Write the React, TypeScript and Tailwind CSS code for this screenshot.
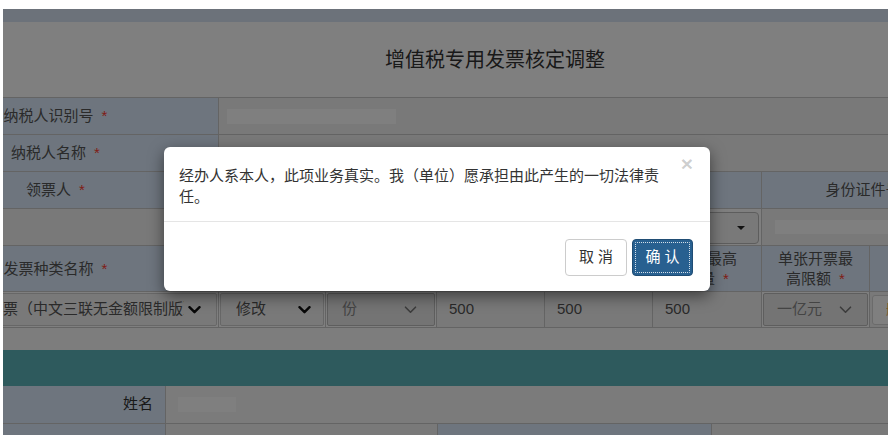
import type { ReactNode } from 'react';

/** Red required marker used after every mandatory field label. */
function Star(): JSX.Element {
  return <span className="ml-[8px] text-[#ff3b30]">*</span>;
}

interface CellProps {
  className?: string;
  children?: ReactNode;
  req?: boolean;
}

/** Blue-grey header / label cell, text centred. */
function Label({ className = '', children, req }: CellProps): JSX.Element {
  return (
    <div
      className={`flex shrink-0 items-center justify-center border-r border-[#c8c8c8] bg-[#dcebfc] text-center leading-[20px] ${className}`}
    >
      <span>
        {children}
        {req && <Star />}
      </span>
    </div>
  );
}

/** Plain value cell (an input without visible chrome). */
function Value({ className = '', children }: CellProps): JSX.Element {
  return (
    <div className={`flex shrink-0 items-center border-r border-[#c8c8c8] bg-[#f3f3f3] ${className}`}>
      {children}
    </div>
  );
}

function Chevron({ bold }: { bold?: boolean }): JSX.Element {
  return (
    <svg width="13" height="8" viewBox="0 0 13 8" className="shrink-0">
      <polyline
        points="1.5,1.2 6.5,6.2 11.5,1.2"
        fill="none"
        stroke={bold ? '#111' : '#777'}
        strokeWidth={bold ? 2.4 : 1.6}
        strokeLinecap="round"
        strokeLinejoin="round"
      />
    </svg>
  );
}

interface SelectProps {
  className?: string;
  text: string;
  textClass: string;
  padClass: string;
  disabled?: boolean;
}

/** A native-looking select: left text, chevron at the right edge. */
function Select({ className = '', text, textClass, padClass, disabled }: SelectProps): JSX.Element {
  return (
    <div className={`shrink-0 border-r border-[#c8c8c8] p-px ${className}`}>
      <div
        className={`flex h-full items-center rounded-[2px] border ${padClass} ${
          disabled ? 'border-[#bdbdbd] bg-[#e8e8e8] text-[#888]' : 'border-[#cfcfcf] bg-[#f3f3f3] text-[#555]'
        }`}
      >
        <span className={`overflow-hidden whitespace-nowrap ${textClass}`}>{text}</span>
        <span className="ml-auto">
          <Chevron bold={!disabled} />
        </span>
      </div>
    </div>
  );
}

function Modal(): JSX.Element {
  return (
    <div className="absolute left-[161px] top-[138px] w-[546px] rounded-[6px] bg-white text-[#333] shadow-[0_5px_15px_rgba(0,0,0,0.5)]">
      <button
        type="button"
        className="absolute right-[17px] top-[6px] text-[21px] font-bold leading-[21px] text-black/20"
      >
        ×
      </button>
      <div className="pb-[14px] pl-[15px] pr-[28px] pt-[18px] text-[15px] leading-[21px]">
        经办人系本人，此项业务真实。我（单位）愿承担由此产生的一切法律责任。
      </div>
      <div className="flex justify-end gap-[5px] border-t border-[#e5e5e5] pb-[15px] pr-[17px] pt-[17px]">
        <button
          type="button"
          className="h-[37px] w-[62px] rounded-[4px] border border-[#cccccc] bg-white text-[15px] text-[#333]"
        >
          取 消
        </button>
        <button
          type="button"
          className="h-[37px] w-[61px] rounded-[4px] border border-[#204d74] bg-[#286090] text-[15px] text-white outline-1 outline-offset-[-4px] outline-white/80 outline-dotted"
        >
          确 认
        </button>
      </div>
    </div>
  );
}

export default function App(): JSX.Element {
  return (
    <div className="h-[438px] w-[892px] overflow-hidden bg-white pl-[3px] pt-[9px] font-['Liberation_Sans','Noto_Sans_CJK_SC',sans-serif]">
      <div className="relative h-[426px] w-[885px] overflow-hidden">
        {/* the form is wider than the viewport and scrolled, hence the negative margin */}
        <div className="ml-[-110px] w-[1204px] text-[15px] text-[#555]">
          <div className="h-[13px] bg-[#d8e4f4]" />
          <div className="flex h-[76px] items-center justify-center border-b border-[#c8c8c8] bg-white text-[20px] text-[#333]">
            增值税专用发票核定调整
          </div>

          <div className="flex h-[37px] border-b border-[#c8c8c8]">
            <Label className="w-[326px]" req>
              纳税人识别号
            </Label>
            <Value className="flex-1 pl-[8px]">
              <div className="h-[15px] w-[169px] bg-white" />
            </Value>
          </div>
          <div className="flex h-[37px] border-b border-[#c8c8c8]">
            <Label className="w-[326px]" req>
              纳税人名称
            </Label>
            <Value className="flex-1" />
          </div>

          {/* 领票人 header row; the middle headers sit under the dialog */}
          <div className="flex h-[37px] border-b border-[#c8c8c8]">
            <Label className="w-[326px]" req>
              领票人
            </Label>
            <Label className="w-[218px]" />
            <Label className="w-[216px]" />
            <Label className="w-[109px]" />
            <Label className="w-[232px]" req>
              身份证件号码
            </Label>
            <Label className="flex-1" />
          </div>
          <div className="flex h-[37px] border-b border-[#c8c8c8]">
            <Value className="w-[326px]" />
            <Value className="w-[218px]" />
            <Value className="w-[216px]" />
            <div className="w-[109px] shrink-0 border-r border-[#c8c8c8] px-[2px] pt-[3px] pb-px">
              <div className="flex h-full items-center justify-end rounded-[4px] border border-[#bbbbbb] bg-[#f3f3f3] pr-[13px]">
                <span className="h-0 w-0 border-x-[4px] border-t-[4px] border-x-transparent border-t-[#222]" />
              </div>
            </div>
            <Value className="w-[232px] pl-[13px]">
              <div className="h-[14px] w-[150px] bg-white" />
            </Value>
            <Value className="flex-1" />
          </div>

          <div className="flex h-[46px] border-b border-[#c8c8c8]">
            <Label className="w-[326px]" req>
              发票种类名称
            </Label>
            <Label className="w-[107px]" />
            <Label className="w-[111px]" />
            <Label className="w-[108px]" />
            <Label className="w-[108px]" />
            <Label className="w-[109px]" req>
              持票最高
              <br />
              数量
            </Label>
            <Label className="w-[108px]" req>
              单张开票最
              <br />
              高限额
            </Label>
            <Label className="flex-1">操作</Label>
          </div>
          <div className="flex h-[36px] border-b border-[#c8c8c8]">
            <Select
              className="w-[326px]"
              text="增值税专用发票（中文三联无金额限制版）"
              textClass="w-[271px]"
              padClass="pl-[18px] pr-[15px]"
            />
            <Select className="w-[107px]" text="修改" textClass="" padClass="pl-[15px] pr-[12px]" />
            <Select className="w-[111px]" text="份" textClass="" padClass="pl-[14px] pr-[17px]" disabled />
            <Value className="w-[108px] pl-[12px]">500</Value>
            <Value className="w-[108px] pl-[12px]">500</Value>
            <Value className="w-[109px] pl-[12px]">500</Value>
            <Select className="w-[108px]" text="一亿元" textClass="" padClass="pl-[13px] pr-[15px]" disabled />
            <div className="flex flex-1 items-center bg-[#f3f3f3] pl-[2px]">
              <div className="flex h-[30px] items-center rounded-[3px] border border-[#d6d6d6] bg-white pl-[13px] pr-[11px] text-[14px] text-[#f0ad4e]">
                删除
              </div>
            </div>
          </div>

          <div className="h-[22px] bg-[#fbfbfb]" />
          <div className="h-[36px] bg-[#5db5ba]" />

          <div className="flex h-[38px] border-b border-[#c8c8c8]">
            <div className="flex w-[273px] shrink-0 items-center justify-end border-r border-[#c8c8c8] bg-[#dcebfc] pr-[12px] text-[#333]">
              姓名
            </div>
            <div className="flex flex-1 items-center bg-[#f7f7f7] pl-[12px]">
              <div className="h-[15px] w-[58px] bg-white" />
            </div>
          </div>
          <div className="flex h-[38px]">
            <div className="w-[273px] shrink-0 border-r border-[#c8c8c8] bg-[#dcebfc]" />
            <div className="w-[272px] shrink-0 border-r border-[#c8c8c8] bg-[#f3f3f3]" />
            <div className="w-[274px] shrink-0 border-r border-[#c8c8c8] bg-[#dcebfc]" />
            <div className="flex-1 bg-[#f3f3f3]" />
          </div>
        </div>

        <div className="absolute inset-0 bg-black/50" />
        <Modal />
      </div>
    </div>
  );
}
